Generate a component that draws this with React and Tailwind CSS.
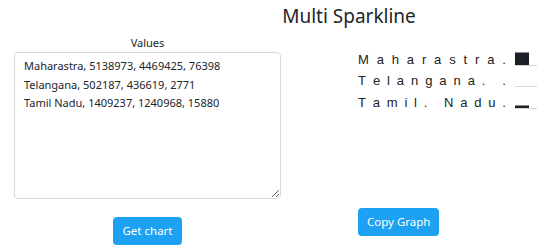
import React from 'react';

const rows = [
  { label: 'Maharastra.', bars: [13, 13] },
  { label: 'Telangana. .', bars: [0, 0] },
  { label: 'Tamil. Nadu.', bars: [3, 3] },
];

const Spark = ({ bars }) => (
  <svg width="22" height="14" viewBox="0 0 22 14" className="block">
    {bars.map((h, i) =>
      h > 0 ? <rect key={i} x={i * 7} y={13.5 - h} width="7" height={h} fill="#1c1f26" /> : null
    )}
    {bars[0] > 0 && <line x1="7" y1={13.5 - bars[0]} x2="7" y2="13.5" stroke="#2c3340" strokeWidth="0.6" />}
    <line x1="0" y1="13.5" x2="22" y2="13.5" stroke="#d4d6d9" strokeWidth="1" />
  </svg>
);

const SparkLabel = ({ text }) => (
  <div className="flex w-[148px] justify-between text-[13px] leading-none text-[#222]" style={{ fontFamily: '"Liberation Sans", Arial, sans-serif' }}>
    {text.split('').map((c, i) => (
      <span key={i} className={c === ' ' ? 'w-[3px]' : ''}>{c === ' ' ? '\u00a0' : c}</span>
    ))}
  </div>
);

export default function App() {
  return (
    <div className="w-[560px] h-[252px] bg-white text-[#212529] overflow-hidden" style={{ fontFamily: '"Noto Sans", "Open Sans", sans-serif' }}>
      <div className="flex justify-center pl-[138px] pt-[2px]">
        <h1 className="text-[19px] leading-[28px]">Multi Sparkline</h1>
      </div>
      <div className="flex">
        {/* Input column */}
        <div className="w-[295px] pl-[14px] pr-[14px] flex flex-col items-center">
          <label className="text-[11px] leading-[18px] mt-[4px]">Values</label>
          <textarea
            className="w-[267px] h-[147px] border border-[#d7dadd] rounded-[4px] px-[9px] py-[4px] text-[11px] leading-[18.5px] outline-none"
            defaultValue={'Maharastra, 5138973, 4469425, 76398\nTelangana, 502187, 436619, 2771\nTamil Nadu, 1409237, 1240968, 15880'}
          />
          <button className="mt-[18px] h-[28px] px-[10px] rounded-[4px] bg-[#1da1f2] text-white text-[11.5px]">Get chart</button>
        </div>
        {/* Output column */}
        <div className="pl-[63px] pt-[14px] flex flex-col">
          {rows.map((r) => (
            <div key={r.label} className="flex items-end gap-[9px] h-[21.5px]">
              <SparkLabel text={r.label} />
              <Spark bars={r.bars} />
            </div>
          ))}
          <div>
            <button className="mt-[99px] h-[28px] px-[9px] rounded-[4px] bg-[#1da1f2] text-white text-[11.5px]">Copy Graph</button>
          </div>
        </div>
      </div>
    </div>
  );
}
